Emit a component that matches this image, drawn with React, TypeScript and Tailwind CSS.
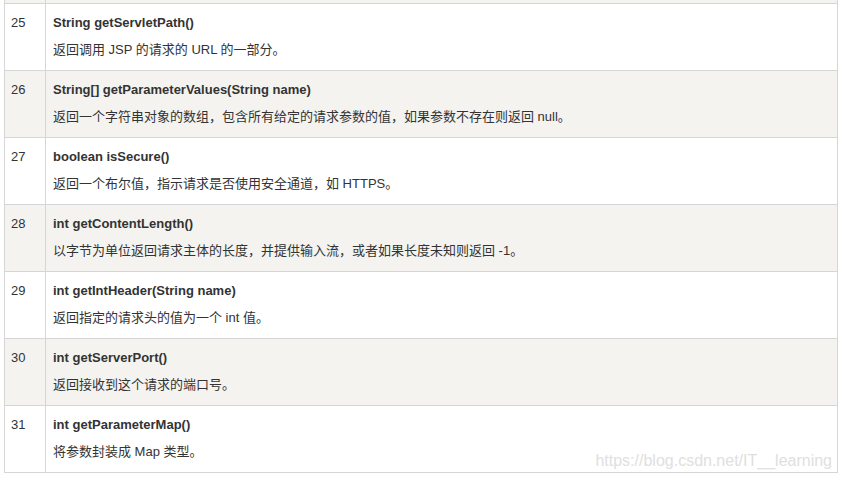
import React from "react";

interface Method {
  no: number;
  sig: string;
  desc: string;
}

const methods: Method[] = [
  { no: 25, sig: "String getServletPath()", desc: "返回调用 JSP 的请求的 URL 的一部分。" },
  {
    no: 26,
    sig: "String[] getParameterValues(String name)",
    desc: "返回一个字符串对象的数组，包含所有给定的请求参数的值，如果参数不存在则返回 null。",
  },
  { no: 27, sig: "boolean isSecure()", desc: "返回一个布尔值，指示请求是否使用安全通道，如 HTTPS。" },
  {
    no: 28,
    sig: "int getContentLength()",
    desc: "以字节为单位返回请求主体的长度，并提供输入流，或者如果长度未知则返回 -1。",
  },
  { no: 29, sig: "int getIntHeader(String name)", desc: "返回指定的请求头的值为一个 int 值。" },
  { no: 30, sig: "int getServerPort()", desc: "返回接收到这个请求的端口号。" },
  { no: 31, sig: "int getParameterMap()", desc: "将参数封装成 Map 类型。" },
];

function Row({ m, shaded }: { m: Method; shaded: boolean }) {
  return (
    <div
      className={`flex h-[67px] border-t border-[#d6d6d6] ${shaded ? "bg-[#f4f3f0]" : "bg-white"}`}
    >
      <div className="w-[41px] shrink-0 border-r border-[#d6d6d6] pl-[6px] pt-[9px] leading-[20px]">
        {m.no}
      </div>
      <div className="flex-1 pl-[7px] pt-[9px]">
        <div className="font-bold leading-[20px]">{m.sig}</div>
        <div className="mt-[7px] leading-[20px]">{m.desc}</div>
      </div>
    </div>
  );
}

export default function App() {
  return (
    <div className="relative h-[480px] w-[841px] overflow-hidden bg-white font-['Liberation_Sans','Noto_Sans_CJK_SC',sans-serif] text-[13px] text-[#333]">
      <div className="ml-[4px] w-[834px] border-x border-b border-[#d6d6d6]">
        <div className="flex h-[3px] bg-[#f4f3f0]">
          <div className="w-[41px] border-r border-[#d6d6d6]" />
        </div>
        {methods.map((m, i) => (
          <Row key={m.no} m={m} shaded={i % 2 === 1} />
        ))}
      </div>
      <div className="absolute right-[9px] top-[451px] text-[16px] leading-[20px] text-[#e0e0e0]">
        https://blog.csdn.net/IT__learning
      </div>
    </div>
  );
}
